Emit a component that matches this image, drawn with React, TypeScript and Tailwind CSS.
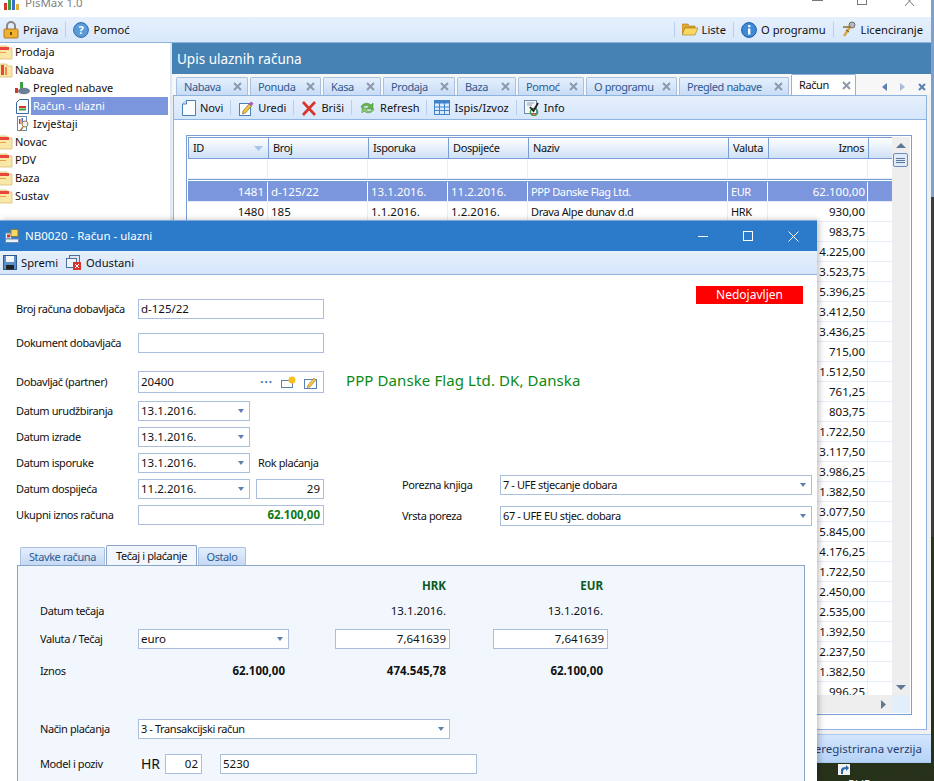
import type { ReactNode } from 'react';

const tight = 'text-[11px] tracking-[-0.4px]';

const iznosi = [
  '62.100,00', '930,00', '983,75', '4.225,00', '3.523,75', '5.396,25', '3.412,50', '3.436,25', '715,00',
  '1.512,50', '761,25', '803,75', '1.722,50', '3.117,50', '3.986,25', '1.382,50', '3.077,50', '5.845,00',
  '4.176,25', '1.722,50', '2.450,00', '2.535,00', '1.392,50', '2.237,50', '1.382,50', '996,25',
];

const kartice = [
  { t: 'Nabava', w: 'w-[72px]' },
  { t: 'Ponuda', w: 'w-[71px]' },
  { t: 'Kasa', w: 'w-[58px]' },
  { t: 'Prodaja', w: 'w-[72px]' },
  { t: 'Baza', w: 'w-[59px]' },
  { t: 'Pomoć', w: 'w-[66px]' },
  { t: 'O programu', w: 'w-[91px]' },
  { t: 'Pregled nabave', w: 'w-[110px]' },
];

function FolderIcon({ open }: { open?: boolean }) {
  return (
    <svg width="17" height="16" viewBox="0 0 17 16" className="shrink-0">
      <path d="M0 2h10v2h5v11H0z" fill="#f8e7a6" stroke="#d8b866" strokeWidth="0.7" />
      {open ? (
        <>
          <rect x="0" y="1" width="3" height="12" fill="#e8453c" />
          <rect x="4" y="3" width="3" height="10" fill="#e8453c" />
          <rect x="8" y="5" width="2" height="8" fill="#f08a50" />
        </>
      ) : (
        <>
          <rect x="0" y="3" width="12" height="3" fill="#e8453c" />
          <rect x="0" y="8" width="9" height="1" fill="#e8a040" />
        </>
      )}
    </svg>
  );
}

function DocIcon() {
  return (
    <svg width="14" height="16" viewBox="0 0 14 16">
      <path d="M4.500.5h9v15H.5V4z" fill="#fbfcfe" stroke="#4a7fb8" />
      <path d="M.5 4h4V.5" fill="#dfe9f6" stroke="#4a7fb8" />
    </svg>
  );
}

function EditIcon() {
  return (
    <svg width="16" height="16" viewBox="0 0 16 16">
      <rect x="1.500" y="3.500" width="11" height="12" fill="#fff" stroke="#4a7fb8" />
      <path d="M5 11l6-7 2.500 2-6 7-3 1z" fill="#f4c542" stroke="#7a6a30" strokeWidth="0.7" />
      <path d="M11 4l2-2.500 2.500 2-2 2.500z" fill="#b050c8" />
    </svg>
  );
}

function XIcon() {
  return (
    <svg width="16" height="16" viewBox="0 0 16 16">
      <path d="M2 2l12 13M14 2L2 15" stroke="#d8342a" strokeWidth="2.6" fill="none" />
    </svg>
  );
}

function RefreshIcon() {
  return (
    <svg width="17" height="16" viewBox="0 0 17 16">
      <path d="M2 7c1-4 7-5 10-2l2-2v6H8l2-2C8 5 5 5 4 8z" fill="#63b34a" stroke="#3f8a32" strokeWidth="0.5" />
      <path d="M15 9c-1 4-7 5-10 2l-2 2V8h6l-2 2c2 2 5 2 6-1z" fill="#8cc96f" stroke="#3f8a32" strokeWidth="0.5" />
    </svg>
  );
}

function TableIcon() {
  return (
    <svg width="16" height="15" viewBox="0 0 16 15">
      <rect x="0.500" y="0.500" width="15" height="14" fill="#dcebfb" stroke="#3f83cc" />
      <rect x="0.500" y="0.500" width="15" height="3" fill="#3f83cc" />
      <path d="M0 7h16M0 10.500h16M5.500 3v12M10.500 3v12" stroke="#3f83cc" />
    </svg>
  );
}

function InfoCheckIcon() {
  return (
    <svg width="16" height="16" viewBox="0 0 16 16">
      <rect x="0.500" y="0.500" width="12" height="13" fill="#f4f6fa" stroke="#6a8ab0" />
      <path d="M3 3h7M3 5h5" stroke="#8a9ab0" />
      <circle cx="10" cy="12" r="3.600" fill="none" stroke="#3aa040" strokeWidth="1.500" />
      <path d="M6 7l3.500 4L14 3" stroke="#222" strokeWidth="1.800" fill="none" />
      <path d="M7 14h5" stroke="#d8342a" strokeWidth="1.200" />
    </svg>
  );
}

function TabX() {
  return (
    <svg width="9" height="9" viewBox="0 0 9 9" className="shrink-0">
      <path d="M1 1l7 7M8 1L1 8" stroke="#8d99ab" strokeWidth="2" fill="none" />
    </svg>
  );
}

function DropArrow() {
  return (
    <svg width="6" height="4" viewBox="0 0 6 4" className="shrink-0">
      <path d="M0 0h6L3 4z" fill="#5b7fb0" />
    </svg>
  );
}

function ToolBtn({ icon, label }: { icon: ReactNode; label: string }) {
  return (
    <span className="flex items-center gap-[4px] whitespace-nowrap">
      {icon}
      {label}
    </span>
  );
}

function Sep() {
  return <span className="mx-[7px] h-[15px] w-px shrink-0 bg-[#b8cfea]" />;
}

function Input({ w, value, right, bold }: { w: string; value?: string; right?: boolean; bold?: boolean }) {
  return (
    <div
      className={`${w} flex h-5 shrink-0 items-center border border-[#a9bfdc] bg-white pl-[2px] pr-[3px] ${right ? 'justify-end' : ''} ${bold ? 'font-bold text-[#0a7a14]' : ''}`}
    >
      {value}
    </div>
  );
}

function Combo({ w, value, uzak }: { w: string; value: string; uzak?: boolean }) {
  return (
    <div className={`${w} flex h-5 shrink-0 items-center justify-between border border-[#a9bfdc] bg-white pl-[2px] pr-[5px]`}>
      <span className={uzak ? tight : ''}>{value}</span>
      <DropArrow />
    </div>
  );
}

function FormRow({ label, top, children }: { label: string; top: string; children: ReactNode }) {
  return (
    <div className={`flex items-center ${top}`}>
      <span className={`w-[122px] shrink-0 whitespace-nowrap ${tight}`}>{label}</span>
      {children}
    </div>
  );
}

function TreeItem({ label, icon, selected }: { label: string; icon: ReactNode; selected?: boolean }) {
  return (
    <div className="flex h-[18px] items-center pl-[14px]">
      <span className="flex w-[17px] justify-center">{icon}</span>
      <span className={`flex h-[18px] w-[137px] items-center pl-[2px] ${selected ? 'bg-[#7b96dc] text-white' : ''}`}>{label}</span>
    </div>
  );
}

function MainWindow() {
  return (
    <div className="flex h-[763px] w-[931px] flex-col bg-white">
      <div className="flex h-[17px] items-end overflow-hidden bg-white">
        <div className="relative h-[17px] w-full">
          <svg width="16" height="10" viewBox="0 0 16 10" className="absolute left-[3px] top-0">
            <rect x="1" y="3" width="3" height="7" fill="#d8342a" />
            <rect x="5" y="0" width="3" height="10" fill="#3aa040" />
            <rect x="9" y="0" width="3" height="10" fill="#3f6fcc" />
            <rect x="13" y="4" width="3" height="6" fill="#e8b030" />
          </svg>
          <span className="absolute left-[25px] top-[-5px] text-[#7f7f7f]">PisMax 1.0</span>
          <span className="absolute left-[812px] top-0 h-px w-[11px] bg-[#777]" />
          <span className="absolute left-[857px] top-[-6px] h-[11px] w-[10px] border border-[#777]" />
          <svg width="10" height="6" viewBox="0 0 10 6" className="absolute left-[904px] top-0">
            <path d="M1-4l9 10M10-4L1 6" stroke="#777" fill="none" />
          </svg>
        </div>
      </div>

      <div className="flex h-[26px] items-center justify-between border-b border-[#8fb3df] bg-gradient-to-b from-[#e6f0fd] to-[#d9e8fb] pl-[3px] pr-[8px] text-[11.2px]">
        <div className="flex items-center">
          <ToolBtn
            label="Prijava"
            icon={
              <svg width="16" height="18" viewBox="0 0 16 18">
                <path d="M4 8V5a4 4 0 018 0v3" fill="none" stroke="#888" strokeWidth="2" />
                <rect x="1" y="8" width="14" height="9" rx="1" fill="#f0b030" stroke="#b07a20" />
                <rect x="7" y="11" width="2" height="3" fill="#6a4a10" />
              </svg>
            }
          />
          <Sep />
          <ToolBtn
            label="Pomoć"
            icon={
              <svg width="16" height="16" viewBox="0 0 16 16">
                <circle cx="8" cy="8" r="7.400" fill="#5b9bd8" stroke="#2a6aaa" />
                <text x="8" y="12" textAnchor="middle" fontSize="11" fontWeight="700" fill="#fff">?</text>
              </svg>
            }
          />
        </div>
        <div className="flex items-center">
          <Sep />
          <ToolBtn
            label="Liste"
            icon={
              <svg width="16" height="13" viewBox="0 0 16 13">
                <path d="M0 1h6l1 2h6v2H3L0 12z" fill="#e0a830" stroke="#a87820" strokeWidth="0.600" />
                <path d="M3 5h13l-3 7H0z" fill="#f8d860" stroke="#a87820" strokeWidth="0.600" />
              </svg>
            }
          />
          <Sep />
          <ToolBtn
            label="O programu"
            icon={
              <svg width="16" height="16" viewBox="0 0 16 16">
                <circle cx="8" cy="8" r="7.400" fill="#3f8ad8" stroke="#1f5aa0" />
                <rect x="7" y="6.500" width="2.400" height="6" fill="#fff" />
                <rect x="7" y="3.200" width="2.400" height="2" fill="#fff" />
              </svg>
            }
          />
          <Sep />
          <ToolBtn
            label="Licenciranje"
            icon={
              <svg width="16" height="17" viewBox="0 0 16 17">
                <circle cx="11" cy="4" r="3" fill="#b8b8b8" stroke="#707070" />
                <path d="M9 6L3 15" stroke="#d8a840" strokeWidth="2.400" />
                <path d="M2 6h8M5 9l3 2" stroke="#8a6a30" strokeWidth="1.400" />
              </svg>
            }
          />
        </div>
      </div>

      <div className="flex min-h-0 flex-1">
        <aside className="w-[170px] shrink-0 overflow-hidden bg-gradient-to-b from-white from-[85%] to-[#eeeeee] text-[11px]">
          {['Prodaja', 'Nabava'].map(t => (
            <div key={t} className="flex h-[18px] items-center">
              <span className="-ml-[3px] mr-[1px]"><FolderIcon open={t === 'Nabava'} /></span>
              {t}
            </div>
          ))}
          <TreeItem
            label="Pregled nabave"
            icon={
              <svg width="16" height="14" viewBox="0 0 16 14">
                <rect x="0" y="7" width="3" height="5" fill="#d8342a" />
                <rect x="5" y="1" width="3" height="11" fill="#3aa040" />
                <ellipse cx="9" cy="10" rx="6" ry="3.200" fill="#6a7f95" />
              </svg>
            }
          />
          <TreeItem
            label="Račun - ulazni"
            selected
            icon={
              <svg width="13" height="15" viewBox="0 0 13 15">
                <path d="M3.500.5h9v14H.5v-11z" fill="#fff" stroke="#3a6aa0" />
                <rect x="3" y="7" width="7" height="2" fill="#d8342a" />
                <rect x="3" y="9.500" width="7" height="2" fill="#3aa040" />
              </svg>
            }
          />
          <TreeItem
            label="Izvještaji"
            icon={
              <svg width="14" height="16" viewBox="0 0 14 16">
                <rect x="1.500" y="0.500" width="9" height="14" fill="#fff" stroke="#6a8ab0" />
                <rect x="3" y="3" width="1.500" height="5" fill="#d8342a" />
                <rect x="5.500" y="2" width="1.500" height="6" fill="#3f6fcc" />
                <circle cx="9" cy="8" r="3" fill="#e8f0fa" stroke="#a08040" />
                <path d="M7 11l-3 4" stroke="#a08040" strokeWidth="1.600" />
              </svg>
            }
          />
          {['Novac', 'PDV', 'Baza', 'Sustav'].map(t => (
            <div key={t} className="flex h-[18px] items-center">
              <span className="-ml-[3px] mr-[1px]"><FolderIcon /></span>
              {t}
            </div>
          ))}
        </aside>

        <div className="w-[2px] shrink-0 bg-[#dce8f7]" />

        <main className="flex min-w-0 flex-1 flex-col bg-[#f0f0f0]">
          <div className="flex h-[31px] items-center bg-[#4682b4] pl-[5px] text-[13.5px] text-white">Upis ulaznih računa</div>

          <div className="flex h-[21px] items-end gap-[2px] whitespace-nowrap bg-[#f7f7f7] pl-[4px]">
            {kartice.map(k => (
              <div
                key={k.t}
                className={`${k.w} flex h-[18px] shrink-0 items-center justify-between rounded-t-[2px] border border-b-0 border-[#a9c0de] bg-gradient-to-b from-[#e4effc] via-[#d6e6fa] to-[#c9dcf6] pl-[7px] pr-[5px] text-[#2f5a8f] ${tight}`}
              >
                {k.t}
                <TabX />
              </div>
            ))}
            <div className={`flex h-[21px] w-[65px] shrink-0 items-center justify-between rounded-t-[2px] border border-b-0 border-[#8fb3df] bg-white pl-[7px] pr-[4px] ${tight}`}>
              Račun
              <TabX />
            </div>
            <div className="ml-[24px] flex items-center gap-[13px] pb-[4px]">
              <svg width="5" height="8" viewBox="0 0 5 8"><path d="M5 0v8L0 4z" fill="#5b7fb0" /></svg>
              <svg width="5" height="8" viewBox="0 0 5 8"><path d="M0 0v8l5-4z" fill="#a8bcd8" /></svg>
              <svg width="8" height="8" viewBox="0 0 8 8"><path d="M1 1l6 6M7 1L1 7" stroke="#5b7fb0" strokeWidth="2" /></svg>
            </div>
          </div>

          <div className="ml-[1px] mr-[4px] flex min-h-0 flex-1 flex-col border border-[#8fb3df] bg-white">
            <div className="flex h-[24px] shrink-0 items-center border-b border-[#8fb3df] bg-gradient-to-b from-[#e6f0fd] to-[#d6e6fb] pl-[8px] text-[11px]">
              <ToolBtn label="Novi" icon={<DocIcon />} />
              <Sep />
              <ToolBtn label="Uredi" icon={<EditIcon />} />
              <Sep />
              <ToolBtn label="Briši" icon={<XIcon />} />
              <Sep />
              <ToolBtn label="Refresh" icon={<RefreshIcon />} />
              <Sep />
              <ToolBtn label="Ispis/Izvoz" icon={<TableIcon />} />
              <Sep />
              <ToolBtn label="Info" icon={<InfoCheckIcon />} />
            </div>

            <div className="ml-[12px] mt-[15px] flex h-[580px] w-[726px] flex-col border border-[#7a9fd4] p-px">
              <div className="flex min-h-0 flex-1">
                <div className="w-[706px] overflow-hidden">
                  <div className={`flex h-[22px] border border-[#7a9fd4] border-r-0 bg-gradient-to-b from-white to-[#cfe0f7] ${tight}`}>
                    <div className="relative flex w-[80px] items-center border-r border-[#7a9fd4] pl-[4px]">
                      ID
                      <svg width="9" height="5" viewBox="0 0 9 5" className="absolute right-[5px] top-[8px]">
                        <path d="M0 0h9L4.500 5z" fill="#a8c4ea" />
                      </svg>
                    </div>
                    <div className="flex w-[100px] items-center border-r border-[#7a9fd4] pl-[4px]">Broj</div>
                    <div className="flex w-[80px] items-center border-r border-[#7a9fd4] pl-[4px]">Isporuka</div>
                    <div className="flex w-[80px] items-center border-r border-[#7a9fd4] pl-[4px]">Dospijeće</div>
                    <div className="flex w-[200px] items-center border-r border-[#7a9fd4] pl-[4px]">Naziv</div>
                    <div className="flex w-[40px] items-center border-r border-[#7a9fd4] pl-[4px]">Valuta</div>
                    <div className="flex w-[100px] items-center justify-end border-r border-[#7a9fd4] pr-[4px]">Iznos</div>
                  </div>
                  <div className="flex h-[20px] border-b border-[#e6eefa]">
                    {['w-[80px]', 'w-[100px]', 'w-[80px]', 'w-[80px]', 'w-[200px]', 'w-[40px]', 'w-[100px]'].map((w, i) => (
                      <div key={i} className={`${w} border-r border-[#e6eefa]`} />
                    ))}
                  </div>
                  <div className="h-[3px] border-y border-[#7a9fd4] bg-white" />
                  {iznosi.map((iz, i) => (
                    <div key={i} className={`flex h-[20px] border-b ${i === 0 ? 'border-[#e6eefa] bg-[#7b96dc] text-white' : 'border-[#e6eefa]'}`}>
                      <div className={`flex w-[80px] items-center justify-end border-r pr-[3px] ${i === 0 ? 'border-white' : 'border-[#e6eefa]'}`}>
                        {i === 0 ? '1481' : i === 1 ? '1480' : ''}
                      </div>
                      <div className={`flex w-[100px] items-center border-r pl-[3px] ${i === 0 ? 'border-white' : 'border-[#e6eefa]'}`}>
                        {i === 0 ? 'd-125/22' : i === 1 ? '185' : ''}
                      </div>
                      <div className={`flex w-[80px] items-center border-r pl-[3px] ${i === 0 ? 'border-white' : 'border-[#e6eefa]'}`}>
                        {i === 0 ? '13.1.2016.' : i === 1 ? '1.1.2016.' : ''}
                      </div>
                      <div className={`flex w-[80px] items-center border-r pl-[3px] ${i === 0 ? 'border-white' : 'border-[#e6eefa]'}`}>
                        {i === 0 ? '11.2.2016.' : i === 1 ? '1.2.2016.' : ''}
                      </div>
                      <div className={`flex w-[200px] items-center border-r pl-[3px] ${tight} ${i === 0 ? 'border-white' : 'border-[#e6eefa]'}`}>
                        {i === 0 ? 'PPP Danske Flag Ltd.' : i === 1 ? 'Drava Alpe dunav d.d' : ''}
                      </div>
                      <div className={`flex w-[40px] items-center border-r pl-[3px] ${tight} ${i === 0 ? 'border-white' : 'border-[#e6eefa]'}`}>
                        {i === 0 ? 'EUR' : i === 1 ? 'HRK' : ''}
                      </div>
                      <div className={`flex w-[100px] items-center justify-end border-r pr-[2px] ${i === 0 ? 'border-white' : 'border-[#e6eefa]'}`}>{iz}</div>
                    </div>
                  ))}
                </div>
                <div className="w-[18px] shrink-0 bg-[#eeeeee]">
                  <svg width="10" height="5" viewBox="0 0 10 5" className="ml-[4px] mt-[6px]"><path d="M0 5h10L5 0z" fill="#5f7896" /></svg>
                  <div className="ml-[1px] mt-[5px] flex h-[14px] w-[15px] flex-col items-center justify-center gap-px rounded-[2px] border border-[#6f8fb8] bg-[#dfeafa]">
                    <span className="h-px w-[9px] bg-[#5f7896]" />
                    <span className="h-px w-[9px] bg-[#5f7896]" />
                    <span className="h-px w-[9px] bg-[#5f7896]" />
                  </div>
                  <svg width="10" height="5" viewBox="0 0 10 5" className="ml-[4px] mt-[518px]"><path d="M0 0h10L5 5z" fill="#5f7896" /></svg>
                </div>
              </div>
              <div className="flex h-[18px] shrink-0">
                <div className="flex flex-1 items-center justify-end bg-[#eeeeee] pr-[6px]">
                  <svg width="5" height="9" viewBox="0 0 5 9"><path d="M0 0v9l5-4.500z" fill="#5f7896" /></svg>
                </div>
                <div className="w-[18px] bg-[#e3eefb]" />
              </div>
            </div>
          </div>

          <div className="mt-[4px] flex h-[29px] shrink-0 items-center justify-end border-y border-[#a9c8ee] bg-gradient-to-b from-[#d3e5fb] to-[#b5d3f8] pr-[9px] text-[#1f3f6f]">
            Neregistrirana verzija
          </div>
        </main>
      </div>
    </div>
  );
}

function RacunDialog() {
  return (
    <div className="absolute left-0 top-[220px] flex h-[561px] w-[817px] flex-col overflow-hidden bg-white shadow-[2px_0_6px_rgba(0,0,0,0.25)]">
      <div className="flex h-[31px] shrink-0 items-center border-t border-[#7fa8d8] bg-[#2b7bca] pl-[5px] text-white">
        <svg width="14" height="14" viewBox="0 0 14 14" className="mr-[6px]">
          <rect x="0.500" y="4" width="6" height="6" fill="#e8f0fa" stroke="#6a8ab0" />
          <rect x="2" y="5.500" width="3" height="3" fill="#d8342a" />
          <rect x="6" y="0.500" width="7" height="7" fill="#f8d860" stroke="#8a7a40" />
          <rect x="0.500" y="10" width="13" height="3.500" fill="#e8f0fa" stroke="#6a8ab0" />
        </svg>
        NB0020 - Račun - ulazni
        <div className="ml-auto flex items-center pr-[18px]">
          <span className="h-px w-[10px] bg-white" />
          <span className="ml-[35px] h-[10px] w-[10px] border border-white" />
          <svg width="11" height="11" viewBox="0 0 11 11" className="ml-[35px]">
            <path d="M.5.5l10 10M10.500.5l-10 10" stroke="#fff" fill="none" />
          </svg>
        </div>
      </div>

      <div className="flex h-[24px] shrink-0 items-center gap-[8px] border-b border-[#8fb3df] bg-gradient-to-b from-[#e6f0fd] to-[#d6e6fb] pl-[3px] text-[11.2px]">
        <ToolBtn
          label="Spremi"
          icon={
            <svg width="14" height="15" viewBox="0 0 14 15">
              <rect x="0.500" y="0.500" width="13" height="14" fill="#5b8fc8" stroke="#2f5a8f" />
              <rect x="3" y="1" width="8" height="6" fill="#f4f6fa" />
              <rect x="3" y="10" width="8" height="4.500" fill="#222" />
            </svg>
          }
        />
        <ToolBtn
          label="Odustani"
          icon={
            <svg width="16" height="15" viewBox="0 0 16 15">
              <rect x="3.500" y="0.500" width="10" height="9" fill="#dce8f7" stroke="#4f6f98" />
              <rect x="0.500" y="3.500" width="10" height="9" fill="#eef4fb" stroke="#4f6f98" />
              <rect x="7" y="7" width="8" height="8" fill="#d8342a" />
              <path d="M9 9l4 4M13 9l-4 4" stroke="#fff" />
            </svg>
          }
        />
      </div>

      <div className="flex">
        <div className="ml-[16px] w-[308px] shrink-0 pt-[24px]">
          <FormRow label="Broj računa dobavljača" top="">
            <Input w="w-[186px]" value="d-125/22" />
          </FormRow>
          <FormRow label="Dokument dobavljača" top="mt-[14px]">
            <Input w="w-[186px]" />
          </FormRow>
          <FormRow label="Dobavljač (partner)" top="mt-[18px]">
            <div className="flex h-[22px] w-[186px] items-center border border-[#a9bfdc] bg-white pl-[2px] pr-[5px]">
              20400
              <span className="ml-auto flex items-center gap-[7px]">
                <span className="mr-[1px] font-bold leading-[8px] tracking-[1px] text-[#3f6fa8]">···</span>
                <svg width="16" height="12" viewBox="0 0 16 12">
                  <rect x="0.500" y="4.500" width="11" height="7" fill="#fff" stroke="#5b7fb0" />
                  <circle cx="11" cy="4" r="3.500" fill="#f8c020" />
                </svg>
                <svg width="14" height="13" viewBox="0 0 14 13">
                  <rect x="0.500" y="3.500" width="12" height="9" fill="#fff" stroke="#5b7fb0" />
                  <path d="M4 9l6-7 2 2-6 7-3 .5z" fill="#f4c542" stroke="#7a6a30" strokeWidth="0.500" />
                </svg>
              </span>
            </div>
          </FormRow>
          <FormRow label="Datum urudžbiranja" top="mt-[8px]">
            <Combo w="w-[112px]" value="13.1.2016." />
          </FormRow>
          <FormRow label="Datum izrade" top="mt-[6px]">
            <Combo w="w-[112px]" value="13.1.2016." />
          </FormRow>
          <FormRow label="Datum isporuke" top="mt-[6px]">
            <Combo w="w-[112px]" value="13.1.2016." />
            <span className={`ml-[8px] whitespace-nowrap ${tight}`}>Rok plaćanja</span>
          </FormRow>
          <FormRow label="Datum dospijeća" top="mt-[6px]">
            <Combo w="w-[112px]" value="11.2.2016." />
            <span className="ml-[6px]"><Input w="w-[68px]" value="29" right /></span>
          </FormRow>
          <FormRow label="Ukupni iznos računa" top="mt-[6px]">
            <Input w="w-[186px]" value="62.100,00" right bold />
          </FormRow>
        </div>

        <div className="ml-[22px] w-[466px] shrink-0">
          <div className="ml-[350px] mt-[11px] flex h-[18px] w-[107px] items-center justify-center bg-[#ff0000] text-[12px] text-white">Nedojavljen</div>
          <div className="mt-[64px] h-[24px] text-[15px] leading-[24px] tracking-[0.1px] text-[#0a8a14]">PPP Danske Flag Ltd. DK, Danska</div>
          <div className="ml-[56px] mt-[83px] flex items-center">
            <span className={`w-[98px] ${tight}`}>Porezna knjiga</span>
            <Combo w="w-[312px]" value="7 - UFE stjecanje dobara" uzak />
          </div>
          <div className="ml-[56px] mt-[11px] flex items-center">
            <span className={`w-[98px] ${tight}`}>Vrsta poreza</span>
            <Combo w="w-[312px]" value="67 - UFE EU stjec. dobara" uzak />
          </div>
        </div>
      </div>

      <div className={`ml-[17px] mt-[19px] flex h-[20px] items-end pl-[3px] ${tight}`}>
        <div className="mr-[1px] flex h-[18px] w-[85px] items-center justify-center rounded-t-[2px] border border-b-0 border-[#a9c0de] bg-gradient-to-b from-[#e4effc] to-[#c4d9f5] text-[#2f5a8f]">Stavke računa</div>
        <div className="mr-[1px] flex h-[20px] w-[91px] items-center justify-center rounded-t-[2px] border border-b-0 border-[#8ba5c9] bg-[#f2f7fe]">Tečaj i plaćanje</div>
        <div className="flex h-[18px] w-[48px] items-center justify-center rounded-t-[2px] border border-b-0 border-[#a9c0de] bg-gradient-to-b from-[#e4effc] to-[#c4d9f5] text-[#2f5a8f]">Ostalo</div>
      </div>

      <div className="ml-[17px] w-[788px] flex-1 border border-b-0 border-[#8ba5c9] bg-[#f2f7fe] pl-[22px]">
        <div className="mt-[12px] flex h-[16px] items-center">
          <span className="ml-[295px] w-[111px] text-right font-bold text-[#0b5a20]">HRK</span>
          <span className="ml-[46px] w-[111px] text-right font-bold text-[#0b5a20]">EUR</span>
        </div>
        <div className="mt-[9px] flex h-[16px] items-center">
          <span className={`w-[295px] ${tight}`}>Datum tečaja</span>
          <span className="w-[111px] text-right">13.1.2016.</span>
          <span className="ml-[46px] w-[111px] text-right">13.1.2016.</span>
        </div>
        <div className="mt-[10px] flex items-center">
          <span className={`w-[98px] ${tight}`}>Valuta / Tečaj</span>
          <Combo w="w-[151px]" value="euro" />
          <span className="ml-[46px]"><Input w="w-[115px]" value="7,641639" right /></span>
          <span className="ml-[43px]"><Input w="w-[115px]" value="7,641639" right /></span>
        </div>
        <div className="mt-[14px] flex h-[16px] items-center">
          <span className={`w-[98px] ${tight}`}>Iznos</span>
          <span className="w-[147px] text-right font-bold">62.100,00</span>
          <span className="ml-[50px] w-[111px] text-right font-bold">474.545,78</span>
          <span className="ml-[46px] w-[111px] text-right font-bold">62.100,00</span>
        </div>
        <div className="mt-[40px] flex items-center">
          <span className={`w-[98px] ${tight}`}>Način plaćanja</span>
          <Combo w="w-[312px]" value="3 - Transakcijski račun" uzak />
        </div>
        <div className="mt-[15px] flex items-center">
          <span className={`w-[101px] ${tight}`}>Model i poziv</span>
          <span className="w-[24px] text-[14px]">HR</span>
          <Input w="w-[37px]" value="02" right />
          <span className="ml-[18px]"><Input w="w-[257px]" value="5230" /></span>
        </div>
      </div>
    </div>
  );
}

export default function App() {
  return (
    <div className="relative h-[781px] w-[934px] overflow-hidden bg-gradient-to-br from-[#3d4f22] to-[#26301a] font-['Noto_Sans','DejaVu_Sans',sans-serif] text-[11.5px] leading-[16px] text-[#111]">
      <MainWindow />
      <div className="absolute left-[931px] top-0 h-[197px] w-[3px] bg-[#7fa3c8]" />
      <div className="absolute left-[931px] top-[197px] h-[340px] w-[3px] bg-[#3c3c3c]" />
      <svg width="12" height="11" viewBox="0 0 12 11" className="absolute left-[838px] top-[764px]">
        <rect width="12" height="11" fill="#f2f2f2" />
        <path d="M3 10V6c0-2 2-3 5-3V1l3 3-3 3V5C6 5 5 6 5 8v2z" fill="#2a6aaa" />
      </svg>
      <span className="absolute left-[848px] top-[776px] text-white">Pi JP</span>
      <RacunDialog />
    </div>
  );
}
